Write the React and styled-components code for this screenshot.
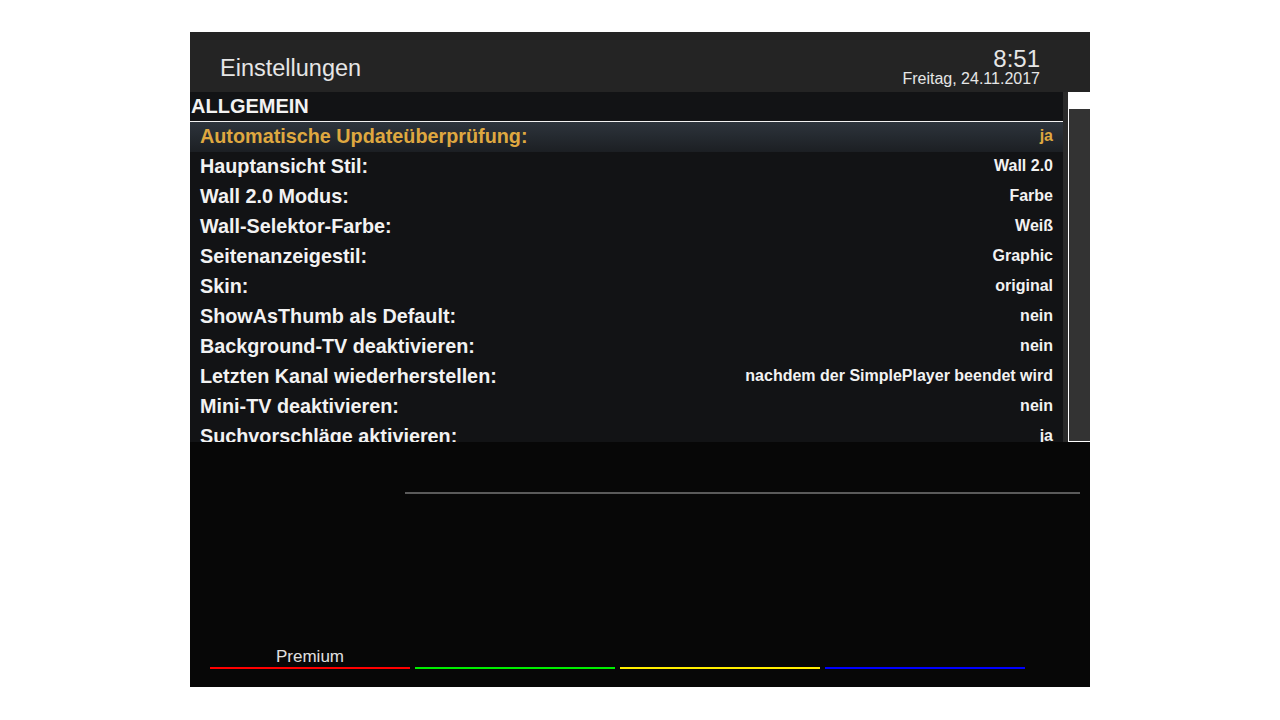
import React from 'react';
import styled, { createGlobalStyle } from 'styled-components';

const GlobalStyle = createGlobalStyle`
  html, body {
    margin: 0;
    padding: 0;
    background: #ffffff;
    font-family: "Liberation Sans", Arial, sans-serif;
  }
`;

const Page = styled.div`
  padding: 32px 0 0 190px;
`;

const Panel = styled.div`
  width: 900px;
  height: 655px;
  display: flex;
  flex-direction: column;
`;

const Header = styled.header`
  height: 60px;
  background: #242424;
  display: flex;
  justify-content: space-between;
  align-items: flex-end;
  padding: 0 50px 0 30px;
  box-sizing: border-box;
  color: #e6e6e6;
`;

const Title = styled.h1`
  margin: 0 0 12px;
  font-size: 23.5px;
  font-weight: normal;
  line-height: 1;
`;

const Clock = styled.div`
  display: flex;
  flex-direction: column;
  align-items: flex-end;
  margin-bottom: 4px;
`;

const Time = styled.span`
  font-size: 24px;
  line-height: 22px;
`;

const DateText = styled.span`
  font-size: 16px;
  line-height: 18px;
`;

const Middle = styled.div`
  height: 350px;
  display: flex;
`;

const List = styled.div`
  width: 873px;
  background: #121315;
  overflow: hidden;
`;

const Section = styled.div`
  height: 29px;
  border-bottom: 1px solid #f2f2f2;
  box-sizing: content-box;
  color: #f2f2f2;
  font-size: 20px;
  font-weight: bold;
  line-height: 29px;
  padding-left: 1px;
`;

const Row = styled.div`
  height: 30px;
  box-sizing: border-box;
  display: flex;
  align-items: center;
  justify-content: space-between;
  padding: 0 10px 2px;
  font-weight: bold;
  color: ${p => (p.$active ? '#dfa840' : '#f2f2f2')};
  background: ${p => (p.$active ? 'linear-gradient(#2d343c, #1c1f23)' : 'transparent')};
`;

const Label = styled.span`
  font-size: 19.8px;
`;

const Value = styled.span`
  font-size: 16px;
`;

const Gutter = styled.div`
  width: 5px;
  background: #2a2a2a;
`;

const Track = styled.div`
  flex: 1;
  background: #ffffff;
  display: flex;
  flex-direction: column;
  padding: 17px 0 1px 1px;
`;

const Thumb = styled.div`
  flex: 1;
  background: #333333;
`;

const Bottom = styled.div`
  flex: 1;
  background: #070707;
  display: flex;
  flex-direction: column;
  padding: 50px 10px 18px 20px;
`;

const Divider = styled.div`
  height: 2px;
  margin-left: 195px;
  background: #5a5a5a;
`;

const Keys = styled.div`
  margin-top: auto;
  display: flex;
  gap: 5px;
`;

const Key = styled.div`
  width: 200px;
  display: flex;
  flex-direction: column;
  align-items: center;
  color: #e0e0e0;
  font-size: 17px;
  line-height: 19px;

  &::after {
    content: '';
    align-self: stretch;
    height: 2px;
    margin-top: 1px;
    background: ${p => p.$color};
  }
`;

const rows = [
  ['Automatische Updateüberprüfung:', 'ja'],
  ['Hauptansicht Stil:', 'Wall 2.0'],
  ['Wall 2.0 Modus:', 'Farbe'],
  ['Wall-Selektor-Farbe:', 'Weiß'],
  ['Seitenanzeigestil:', 'Graphic'],
  ['Skin:', 'original'],
  ['ShowAsThumb als Default:', 'nein'],
  ['Background-TV deaktivieren:', 'nein'],
  ['Letzten Kanal wiederherstellen:', 'nachdem der SimplePlayer beendet wird'],
  ['Mini-TV deaktivieren:', 'nein'],
  ['Suchvorschläge aktivieren:', 'ja'],
];

const keys = [
  { color: '#ff0000', label: 'Premium' },
  { color: '#00ee00', label: '' },
  { color: '#ffee00', label: '' },
  { color: '#0000ff', label: '' },
];

const App = () => {
  return (
    <>
      <GlobalStyle />
      <Page>
        <Panel>
          <Header>
            <Title>Einstellungen</Title>
            <Clock>
              <Time>8:51</Time>
              <DateText>Freitag, 24.11.2017</DateText>
            </Clock>
          </Header>
          <Middle>
            <List>
              <Section>ALLGEMEIN</Section>
              {rows.map(([label, value], i) => (
                <Row key={label} $active={i === 0}>
                  <Label>{label}</Label>
                  <Value>{value}</Value>
                </Row>
              ))}
            </List>
            <Gutter />
            <Track>
              <Thumb />
            </Track>
          </Middle>
          <Bottom>
            <Divider />
            <Keys>
              {keys.map(k => (
                <Key key={k.color} $color={k.color}>
                  {k.label || '\u00a0'}
                </Key>
              ))}
            </Keys>
          </Bottom>
        </Panel>
      </Page>
    </>
  );
};

export default App;
